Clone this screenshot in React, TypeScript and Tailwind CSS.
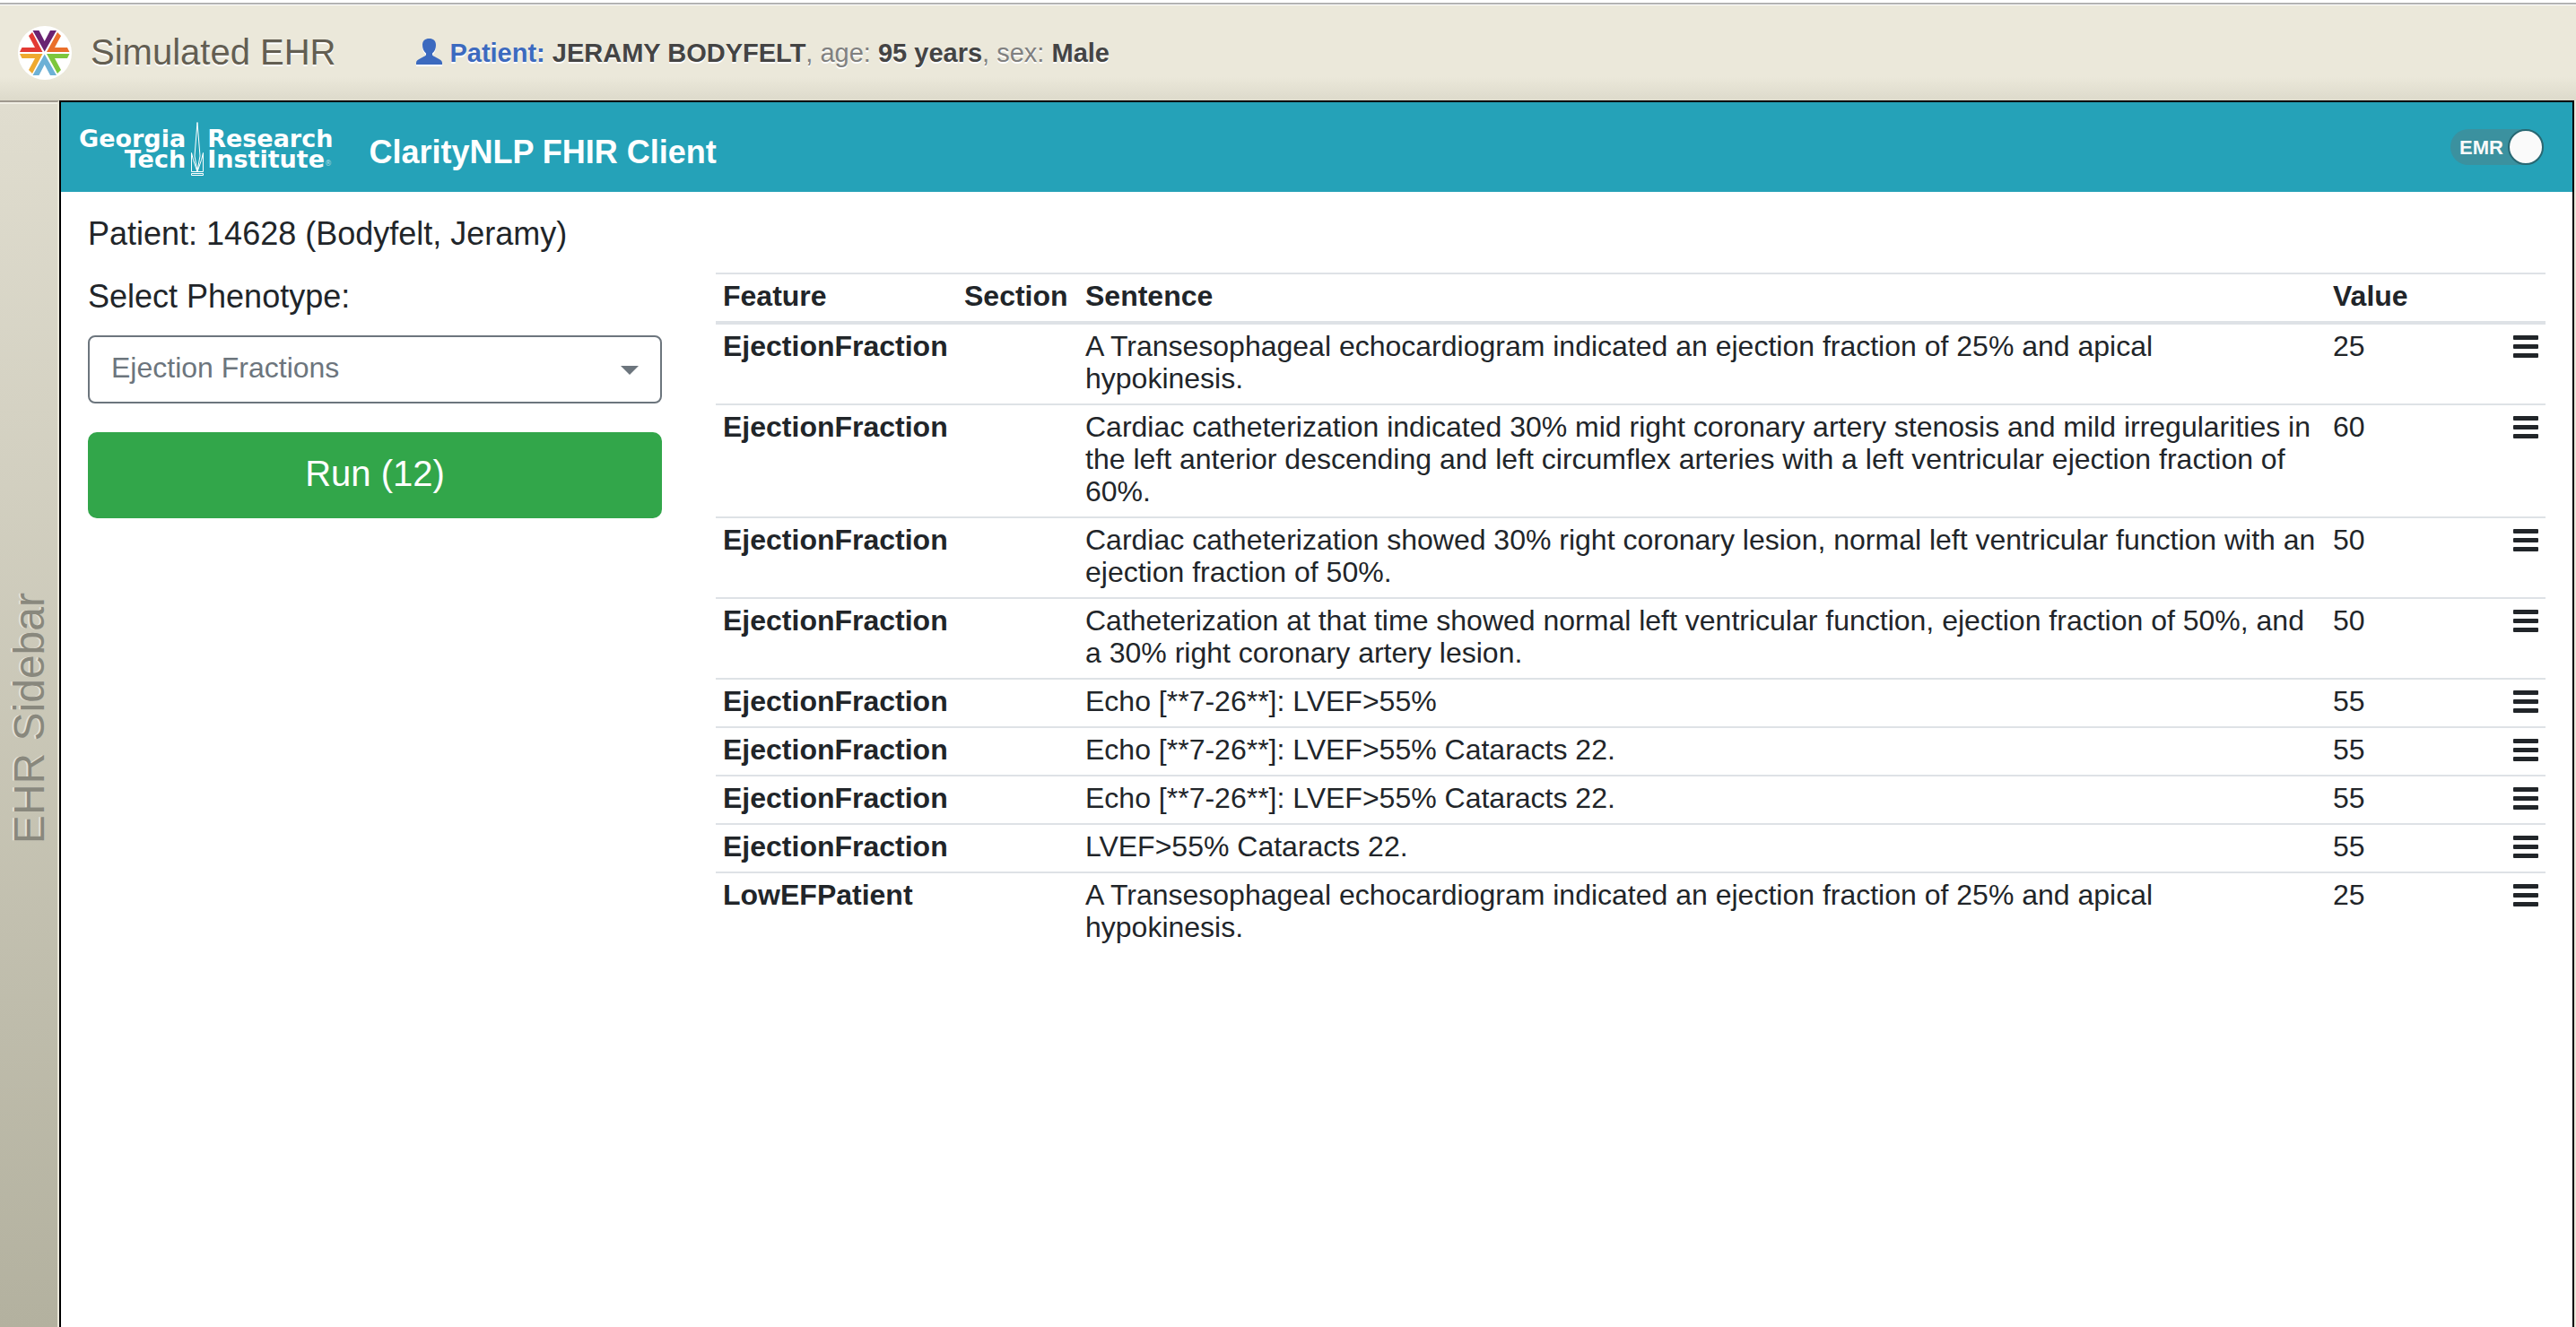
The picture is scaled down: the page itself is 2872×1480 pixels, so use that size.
import { useState } from "react";

type Row = { feature: string; sentence: string; value: number };

const rows: Row[] = [
  {
    feature: "EjectionFraction",
    sentence:
      "A Transesophageal echocardiogram indicated an ejection fraction of 25% and apical hypokinesis.",
    value: 25,
  },
  {
    feature: "EjectionFraction",
    sentence:
      "Cardiac catheterization indicated 30% mid right coronary artery stenosis and mild irregularities in the left anterior descending and left circumflex arteries with a left ventricular ejection fraction of 60%.",
    value: 60,
  },
  {
    feature: "EjectionFraction",
    sentence:
      "Cardiac catheterization showed 30% right coronary lesion, normal left ventricular function with an ejection fraction of 50%.",
    value: 50,
  },
  {
    feature: "EjectionFraction",
    sentence:
      "Catheterization at that time showed normal left ventricular function, ejection fraction of 50%, and a 30% right coronary artery lesion.",
    value: 50,
  },
  { feature: "EjectionFraction", sentence: "Echo [**7-26**]: LVEF>55%", value: 55 },
  { feature: "EjectionFraction", sentence: "Echo [**7-26**]: LVEF>55% Cataracts 22.", value: 55 },
  { feature: "EjectionFraction", sentence: "Echo [**7-26**]: LVEF>55% Cataracts 22.", value: 55 },
  { feature: "EjectionFraction", sentence: "LVEF>55% Cataracts 22.", value: 55 },
  {
    feature: "LowEFPatient",
    sentence:
      "A Transesophageal echocardiogram indicated an ejection fraction of 25% and apical hypokinesis.",
    value: 25,
  },
];

/* Six coloured chevrons pointing at the centre of a white disc. */
function BrandMark() {
  return (
    <svg viewBox="0 0 60 60" className="size-[60px] shrink-0" aria-hidden="true">
      <circle cx="30" cy="30" r="30" fill="#fff" />
      <path d="M16.500 5H23.500L29.700 17L36 5H43L29.700 28.500z" fill="#6a2372" />
      <path d="M16.500 55H23.500L29.700 43L36 55H43L29.700 31.500z" fill="#6db1d6" />
      <path d="M12 11L16 7L27.500 29H2L4.500 24H19z" fill="#e33a34" />
      <path d="M48 11L44 7L32 29H57.500L55 24H41z" fill="#ea6f2b" />
      <path d="M12 49L16 53L27.500 31H2L4.500 36H19z" fill="#efa92f" />
      <path d="M48 49L44 53L32 31H57.500L55 36H41z" fill="#7dc73d" />
    </svg>
  );
}

function PersonIcon() {
  return (
    <svg viewBox="0 0 29 31" className="h-[31px] w-[29px] shrink-0" aria-hidden="true">
      <path
        d="M14.500 2c4.500 0 7.500 2.500 7.500 7 0 4-1 7-4 9.500v2c2.500 2.500 11 4.500 11 8.500v2H0v-2c0-4 8.500-6 11-8.500v-2C8 16 7 13 7 9c0-4.500 3-7 7.500-7z"
        fill="#fff"
      />
      <path
        d="M14.500 0c4.500 0 7.500 2.500 7.500 7 0 4-1 7-4 9.500v2c2.500 2.500 11 4.500 11 8.500v2H0v-2c0-4 8.500-6 11-8.500v-2C8 14 7 11 7 7c0-4.500 3-7 7.500-7z"
        fill="#3c6abf"
      />
    </svg>
  );
}

function InstituteLogo() {
  return (
    <div className="flex items-center font-['DejaVu_Sans',sans-serif] text-[27px] font-bold leading-[23px] text-white">
      <div className="mt-1 text-right">
        <div>Georgia</div>
        <div>Tech</div>
      </div>
      <svg
        viewBox="0 0 14 60"
        className="ml-1.5 mt-1 h-[60px] w-[14px] shrink-0"
        fill="none"
        stroke="#fff"
        strokeWidth="1"
        aria-hidden="true"
      >
        <path d="M7 0.500L4 38l3 17 3-17z" />
        <path d="M0.500 55.500v-21l2 8L7 55.500l4.500-13 2-8v21z" />
        <path d="M0.500 57.500h13v2h-13z" />
      </svg>
      <div className="ml-1 mt-1">
        <div>Research</div>
        <div className="flex items-end">
          Institute<span className="text-[8px] font-normal leading-3 opacity-60">®</span>
        </div>
      </div>
    </div>
  );
}

function MenuBars() {
  return (
    <svg viewBox="0 0 28 26" className="h-[26px] w-7" fill="#212529" aria-hidden="true">
      <rect y="0" width="28" height="5" rx="1" />
      <rect y="10" width="28" height="5" rx="1" />
      <rect y="20" width="28" height="5" rx="1" />
    </svg>
  );
}

export default function App() {
  const [emr, setEmr] = useState(true);
  return (
    <div className="flex min-h-screen flex-col bg-white pt-[3px] font-['Liberation_Sans',Arial,sans-serif] text-[#212529]">
      <header className="flex h-[109px] items-center border-t-2 border-[#b3b3b3] bg-[linear-gradient(to_bottom,#ffffff_1px,#ebe8da_1px,#ebe8da_75%,#dddacb_100%)] pl-5">
        <BrandMark />
        <h1 className="ml-[21px] pb-0.5 text-[40px] leading-[48px] text-[#635e52] [text-shadow:0_2px_0_#fff]">
          Simulated EHR
        </h1>
        <div className="ml-[90px] flex items-center gap-2 text-[29px] leading-9 text-[#808080] [text-shadow:0_2px_0_#fff]">
          <PersonIcon />
          <p>
            <b className="text-[#3c6abf]">Patient:</b>{" "}
            <b className="text-[#444444]">JERAMY BODYFELT</b>, age:{" "}
            <b className="text-[#444444]">95 years</b>, sex: <b className="text-[#444444]">Male</b>
          </p>
        </div>
      </header>

      <div className="flex flex-1 bg-[#ebe8da] pr-0.5">
        <aside className="flex w-[66px] shrink-0 items-center justify-center border-r-2 border-t-2 border-r-[#ebe8da] border-t-[#9f998f] bg-[linear-gradient(to_bottom,#f0eee4_2px,#e0ddcf_2px,#b3b19f_100%)] pl-0.5 pt-2">
          <span className="rotate-180 text-[48px] leading-[56px] text-[#89887d] [text-shadow:0_-2px_0_#e4e2d9] [writing-mode:vertical-rl]">
            EHR Sidebar
          </span>
        </aside>

        <main className="flex-1 border-x-2 border-t-2 border-black bg-white">
          <nav className="flex h-[100px] items-center bg-[#25a2b8] px-5 pr-8">
            <InstituteLogo />
            <a href="#" className="ml-10 mt-3 text-[36px] font-bold leading-[54px] text-white">
              ClarityNLP FHIR Client
            </a>
            <label className="relative ml-auto flex h-10 w-[104px] cursor-pointer items-center rounded-full bg-[#3b919f] pl-2.5 text-[22px] font-bold text-[#fafafa]">
              <input
                type="checkbox"
                role="switch"
                checked={emr}
                onChange={(e) => setEmr(e.target.checked)}
                className="peer sr-only"
              />
              EMR
              <span className="absolute left-0 top-0 size-10 rounded-full border-2 border-[#276873] bg-[#fafafa] peer-checked:left-auto peer-checked:right-0" />
            </label>
          </nav>

          <div className="pt-5">
            <p className="px-[30px] text-[36px] leading-[54px]">Patient: 14628 (Bodyfelt, Jeramy)</p>
            <div className="mt-4 flex">
              <section className="w-1/4 px-[30px]">
                <label htmlFor="phenotype" className="block text-[36px] leading-[54px]">
                  Select Phenotype:
                </label>
                <div className="relative mt-4">
                  <select
                    id="phenotype"
                    className="h-[76px] w-full appearance-none rounded-lg border-2 border-[#6c757d] bg-white pb-1 pl-6 pr-16 text-[32px] text-[#6c757d]"
                  >
                    <option>Ejection Fractions</option>
                  </select>
                  <svg
                    viewBox="0 0 20 10"
                    className="pointer-events-none absolute right-[26px] top-[34px] h-2.5 w-5"
                    aria-hidden="true"
                  >
                    <path d="M0 0h20L10 10z" fill="#6c757d" />
                  </svg>
                </div>
                <button
                  type="button"
                  className="mt-8 h-24 w-full rounded-[10px] bg-[#32a64a] pb-1 text-[40px] text-white"
                >
                  Run (12)
                </button>
              </section>

              <section className="w-3/4 px-[30px]">
                <table className="w-full table-fixed border-separate border-spacing-0 text-left text-[32px] leading-9">
                  <colgroup>
                    <col className="w-[269px]" />
                    <col className="w-[135px]" />
                    <col />
                    <col className="w-[153px]" />
                    <col className="w-[92px]" />
                  </colgroup>
                  <thead>
                    <tr className="[&>th]:border-b-4 [&>th]:border-t-2 [&>th]:border-[#dee2e6] [&>th]:px-2 [&>th]:pb-2.5 [&>th]:pt-1.5">
                      <th scope="col">Feature</th>
                      <th scope="col">Section</th>
                      <th scope="col">Sentence</th>
                      <th scope="col">Value</th>
                      <th scope="col" aria-label="Actions" />
                    </tr>
                  </thead>
                  <tbody>
                    {rows.map((r, i) => (
                      <tr
                        key={i}
                        className="align-top [&:not(:first-child)>*]:border-t-2 [&>*]:border-[#dee2e6] [&>*]:px-2 [&>*]:pb-2.5 [&>*]:pt-1.5"
                      >
                        <th scope="row">{r.feature}</th>
                        <td />
                        <td>{r.sentence}</td>
                        <td>{r.value}</td>
                        <td>
                          <button type="button" aria-label="Row menu" className="ml-auto mt-1.5 block">
                            <MenuBars />
                          </button>
                        </td>
                      </tr>
                    ))}
                  </tbody>
                </table>
              </section>
            </div>
          </div>
        </main>
      </div>
    </div>
  );
}
